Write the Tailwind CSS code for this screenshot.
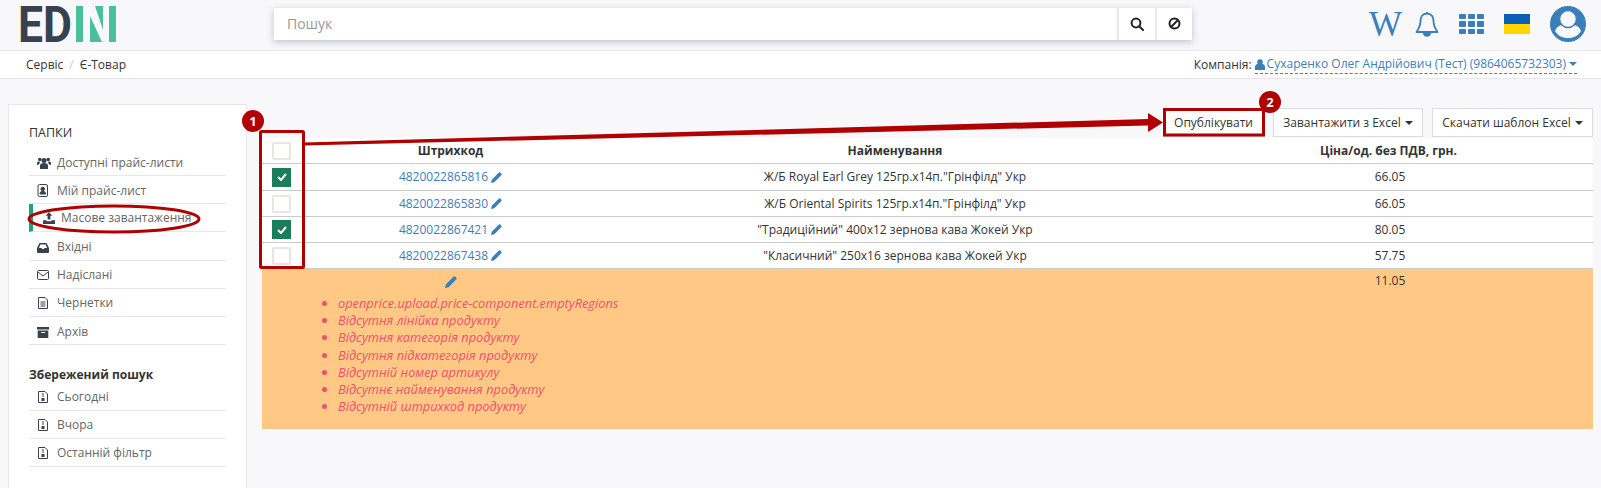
<!DOCTYPE html>
<html lang="uk">
<head>
  <meta charset="UTF-8">
  <title>Є-Товар - EDIN</title>
  <script src="https://cdn.jsdelivr.net/npm/@tailwindcss/browser@4"></script>
</head>
<body class="relative h-[488px] w-[1601px] overflow-hidden bg-[#f8f8fb] font-['Open_Sans',sans-serif] text-[12px] text-[#333]">
  <header class="flex h-[51px] items-center border-b border-[#e6e6ec] pl-[18px]">
    <svg width="58" height="50" viewBox="0 0 58 50">
      <text x="0" y="42" font-family="Roboto" font-weight="700" font-size="50" fill="#37424f" textLength="54" lengthAdjust="spacingAndGlyphs">ED</text>
    </svg>
    <svg class="mb-[2px]" width="40" height="36" viewBox="0 0 40 36">
      <path d="M0 0h7v36H0zM14 10v26h12zM19 0h8v24zM33 0h7v36h-7z" fill="#48c09b"/>
    </svg>
    <div class="mb-[3px] ml-[158px] flex h-[32px] w-[918px] bg-white shadow-[0_2px_7px_rgba(60,60,90,0.3)]">
      <div class="flex flex-1 items-center px-[13px] text-[14px] text-[#999]">Пошук</div>
      <div class="flex w-[38px] items-center justify-center border-l-2 border-[#e8e8e8]">
        <svg width="14" height="14" viewBox="0 0 14 14" fill="none" stroke="#222" stroke-width="2"><circle cx="6" cy="6" r="4.4"/><path d="M9.2 9.2 13 13" stroke-linecap="round"/></svg>
      </div>
      <div class="flex w-[37px] items-center justify-center border-l-2 border-[#e8e8e8]">
        <svg width="13" height="13" viewBox="0 0 13 13" fill="none" stroke="#222" stroke-width="2"><circle cx="6.5" cy="6.5" r="5"/><path d="M3 10 10 3"/></svg>
      </div>
    </div>
    <div class="mb-[2px] ml-[177px] flex items-center">
      <span class="w-[33px] font-['Liberation_Serif',serif] text-[35px] leading-none text-[#3a7fb8]">W</span>
      <svg class="ml-[13px]" width="24" height="26" viewBox="0 0 24 26" fill="none" stroke="#3a7fb8" stroke-width="1.8"><path d="M12 2.500c-4.500 0-6.500 3.500-6.500 7.500 0 5-2 8-4 11h21c-2-3-4-6-4-11 0-4-2-7.500-6.500-7.500z" stroke-linejoin="round"/><path d="M12 1v2"/><path d="M9 22.500c.5 3 5.500 3 6 0z" fill="#3a7fb8"/></svg>
      <div class="ml-[20px] grid grid-cols-3 gap-[2px]">
        <i class="h-[5.500px] w-[7px] rounded-[1px] bg-[#3a7fb8]"></i><i class="h-[5.500px] w-[7px] rounded-[1px] bg-[#3a7fb8]"></i><i class="h-[5.500px] w-[7px] rounded-[1px] bg-[#3a7fb8]"></i>
        <i class="h-[5.500px] w-[7px] rounded-[1px] bg-[#3a7fb8]"></i><i class="h-[5.500px] w-[7px] rounded-[1px] bg-[#3a7fb8]"></i><i class="h-[5.500px] w-[7px] rounded-[1px] bg-[#3a7fb8]"></i>
        <i class="h-[5.500px] w-[7px] rounded-[1px] bg-[#3a7fb8]"></i><i class="h-[5.500px] w-[7px] rounded-[1px] bg-[#3a7fb8]"></i><i class="h-[5.500px] w-[7px] rounded-[1px] bg-[#3a7fb8]"></i>
      </div>
      <div class="ml-[20px] h-[20px] w-[26px]">
        <div class="h-[10px] bg-[#0b5fb5]"></div>
        <div class="h-[10px] bg-[#ffd500]"></div>
      </div>
      <svg class="ml-[20px]" width="36" height="36" viewBox="0 0 36 36"><circle cx="18" cy="18" r="18" fill="#3a7fb8"/><path d="M5 25c1-3 4-6 8-6h10c4 0 7 3 8 6-2.500 4.500-7 7-13 7S7.500 29.500 5 25z" fill="#f8f8fb"/><circle cx="18" cy="13" r="8.500" fill="#f8f8fb" stroke="#3a7fb8" stroke-width="1.500"/></svg>
    </div>
  </header>

  <div class="flex h-[28px] items-center justify-between border-b border-[#e6e6ec] bg-white pr-[24px] pl-[26px]">
    <div class="flex items-center">
      <span>Сервіс</span><span class="ml-[6px] text-[#ccc]">/</span><span class="ml-[6px]">Є-Товар</span>
    </div>
    <div class="flex items-center">
      <span>Компанія:</span>
      <span class="ml-[3px] flex items-center border-b border-dashed border-[#3a7fb8] text-[#3a7fb8]">
        <svg width="10" height="11" viewBox="0 0 10 11" fill="#3a7fb8"><circle cx="5" cy="3" r="2.800"/><path d="M0 11V8c0-2 1.500-3 2.500-3h5C8.500 5 10 6 10 8v3z"/></svg>
        <span class="ml-[2px]">Сухаренко Олег Андрійович (Тест) (9864065732303)</span>
        <i class="ml-[3px] h-0 w-0 border-x-[4px] border-t-[4px] border-x-transparent border-t-[#3a7fb8]"></i>
      </span>
    </div>
  </div>

  <div class="flex pt-[25px] pl-[8px]">
    <aside class="h-[400px] w-[239px] border border-[#e6e6f0] bg-white pt-[19px] pr-[20px] pl-[20px]">
      <div class="mb-[6px] text-[12.500px] leading-[18px] font-medium">ПАПКИ</div>
      <ul class="text-[#666]">
        <li class="flex h-[28.170px] items-center border-b border-[#e8e8ec] pt-[2px] pl-[8px]">
          <svg width="14" height="12" viewBox="0 0 14 12" fill="#37424f"><circle cx="7" cy="3.500" r="2.500"/><circle cx="2.800" cy="2.500" r="1.800"/><circle cx="11.200" cy="2.500" r="1.800"/><path d="M3 12V8.500C3 7 4.500 6 7 6s4 1 4 2.500V12zM0 8V6c0-1 1-1.500 2-1.500l1 .5-1 2.500zM14 8V6c0-1-1-1.500-2-1.500l-1 .5 1 2.500z"/></svg>
          <span class="ml-[6px]">Доступні прайс-листи</span>
        </li>
        <li class="flex h-[28.170px] items-center border-b border-[#e8e8ec] pt-[2px] pl-[8px]">
          <svg width="12" height="13" viewBox="0 0 12 13" fill="none" stroke="#37424f"><rect x="1" y=".5" width="9.500" height="12" rx="1.500"/><circle cx="5.700" cy="5" r="1.800" fill="#37424f"/><path d="M3 10c0-4 5.500-4 5.500 0z" fill="#37424f"/></svg>
          <span class="ml-[8px]">Мій прайс-лист</span>
        </li>
        <li class="flex h-[28.170px] items-center border-b border-[#e8e8ec] border-l-[4px] border-l-[#19a67f] pl-[10px]">
          <svg width="12" height="12" viewBox="0 0 13 13" fill="#37424f"><path d="M6.500 0 10 4H8v4H5V4H3zM0 9h4v1h5V9h4v4H0z"/></svg>
          <span class="ml-[6px]">Масове завантаження</span>
        </li>
        <li class="flex h-[28.170px] items-center border-b border-[#e8e8ec] pt-[2px] pl-[8px]">
          <svg width="12" height="11" viewBox="0 0 12 11" fill="#37424f"><path d="M2.500 1h7L12 6v4a1 1 0 0 1-1 1H1a1 1 0 0 1-1-1V6zm.8 1.500L2 6h2.500l.7 1h1.600l.7-1H10L8.700 2.500z"/></svg>
          <span class="ml-[8px]">Вхідні</span>
        </li>
        <li class="flex h-[28.170px] items-center border-b border-[#e8e8ec] pt-[2px] pl-[8px]">
          <svg width="12" height="10" viewBox="0 0 12 10" fill="none" stroke="#37424f"><rect x=".5" y=".5" width="11" height="9" rx="1"/><path d="m1 2 5 4 5-4"/></svg>
          <span class="ml-[8px]">Надіслані</span>
        </li>
        <li class="flex h-[28.170px] items-center border-b border-[#e8e8ec] pt-[2px] pl-[8px]">
          <svg width="12" height="12" viewBox="0 0 12 12" fill="none" stroke="#37424f"><path d="M1.500.5H8L10.500 3v8.500h-9zM3.500 5h5M3.500 7h5M3.500 9h5"/></svg>
          <span class="ml-[8px]">Чернетки</span>
        </li>
        <li class="flex h-[28.170px] items-center border-b border-[#e8e8ec] pt-[2px] pl-[8px]">
          <svg width="12" height="12" viewBox="0 0 12 12" fill="#37424f"><path d="M0 1h12v2.500H0zM.7 4.500h10.600V12H.7z"/><path d="M4 6h4v1H4z" fill="#fff"/></svg>
          <span class="ml-[8px]">Архів</span>
        </li>
      </ul>
      <div class="mt-[21px] -mb-[1px] text-[12px] leading-[18px] font-bold text-[#333]">Збережений пошук</div>
      <ul class="text-[#666]">
        <li class="flex h-[28.170px] items-center border-b border-[#e8e8ec] pl-[8px]">
          <svg width="12" height="12" viewBox="0 0 12 12" fill="none" stroke="#37424f"><path d="M1.500.5H8L10.500 3v8.500h-9z"/><path d="M5.500 2h1v4h-1zM4.500 7h3v3h-3z" fill="#37424f" stroke="none"/></svg>
          <span class="ml-[8px]">Сьогодні</span>
        </li>
        <li class="flex h-[28.170px] items-center border-b border-[#e8e8ec] pl-[8px]">
          <svg width="12" height="12" viewBox="0 0 12 12" fill="none" stroke="#37424f"><path d="M1.500.5H8L10.500 3v8.500h-9z"/><path d="M5.500 2h1v4h-1zM4.500 7h3v3h-3z" fill="#37424f" stroke="none"/></svg>
          <span class="ml-[8px]">Вчора</span>
        </li>
        <li class="flex h-[28px] items-center border-b border-[#e8e8ec] pl-[8px]">
          <svg width="12" height="12" viewBox="0 0 12 12" fill="none" stroke="#37424f"><path d="M1.500.5H8L10.500 3v8.500h-9z"/><path d="M5.500 2h1v4h-1zM4.500 7h3v3h-3z" fill="#37424f" stroke="none"/></svg>
          <span class="ml-[8px]">Останній фільтр</span>
        </li>
      </ul>
    </aside>

    <main class="ml-[15px] w-[1331px]">
      <div class="flex h-[34px] justify-end gap-[9px] pt-[4px]">
        <button class="h-[29px] w-[101px] border border-[#ddd] bg-white">Опублікувати</button>
        <button class="flex h-[29px] w-[150px] items-center justify-center border border-[#ddd] bg-white">Завантажити з Excel<i class="ml-[4px] h-0 w-0 border-x-[4px] border-t-[4px] border-x-transparent border-t-[#333]"></i></button>
        <button class="flex h-[29px] w-[161px] items-center justify-center border border-[#ddd] bg-white">Скачати шаблон Excel<i class="ml-[4px] h-0 w-0 border-x-[4px] border-t-[4px] border-x-transparent border-t-[#333]"></i></button>
      </div>
      <div class="grid h-[26px] grid-cols-[39px_299px_590px_403px] items-center border-b border-[#ccc] bg-white text-center font-bold">
        <span class="mx-auto h-[18px] w-[19px] rounded-[2px] border-2 border-[#e9e6e2]"></span><span>Штрихкод</span><span>Найменування</span><span class="pr-[6px]">Ціна/од. без ПДВ, грн.</span>
      </div>
      <div class="grid h-[27px] grid-cols-[39px_299px_590px_403px] items-center border-b border-[#ccc] bg-white text-center">
        <span class="mx-auto flex h-[19px] w-[19px] items-center justify-center bg-[#1c7d5a]"><svg width="10" height="8" viewBox="0 0 10 8" fill="none" stroke="#fff" stroke-width="2"><path d="m1 4 3 3 5-6"/></svg></span>
        <span class="flex items-center justify-center text-[#3a7fb8]">4820022865816<svg class="ml-[3px]" width="11" height="11" viewBox="0 0 10 10" fill="#3a7fb8"><path d="M0 10 .7 7 7 .7a1.200 1.200 0 0 1 1.700 0l.6.6a1.200 1.200 0 0 1 0 1.700L3 9.300z"/></svg></span>
        <span>Ж/Б Royal Earl Grey 125гр.х14п."Грінфілд" Укр</span><span class="pr-[3px]">66.05</span>
      </div>
      <div class="grid h-[26px] grid-cols-[39px_299px_590px_403px] items-center border-b border-[#ccc] bg-white text-center">
        <span class="mx-auto h-[18px] w-[19px] rounded-[2px] border-2 border-[#e9e6e2]"></span>
        <span class="flex items-center justify-center text-[#3a7fb8]">4820022865830<svg class="ml-[3px]" width="11" height="11" viewBox="0 0 10 10" fill="#3a7fb8"><path d="M0 10 .7 7 7 .7a1.200 1.200 0 0 1 1.700 0l.6.6a1.200 1.200 0 0 1 0 1.700L3 9.300z"/></svg></span>
        <span>Ж/Б Oriental Spirits 125гр.х14п."Грінфілд" Укр</span><span class="pr-[3px]">66.05</span>
      </div>
      <div class="grid h-[26px] grid-cols-[39px_299px_590px_403px] items-center border-b border-[#ccc] bg-white text-center">
        <span class="mx-auto flex h-[19px] w-[19px] items-center justify-center bg-[#1c7d5a]"><svg width="10" height="8" viewBox="0 0 10 8" fill="none" stroke="#fff" stroke-width="2"><path d="m1 4 3 3 5-6"/></svg></span>
        <span class="flex items-center justify-center text-[#3a7fb8]">4820022867421<svg class="ml-[3px]" width="11" height="11" viewBox="0 0 10 10" fill="#3a7fb8"><path d="M0 10 .7 7 7 .7a1.200 1.200 0 0 1 1.700 0l.6.6a1.200 1.200 0 0 1 0 1.700L3 9.300z"/></svg></span>
        <span>"Традиційний" 400х12 зернова кава Жокей Укр</span><span class="pr-[3px]">80.05</span>
      </div>
      <div class="grid h-[26px] grid-cols-[39px_299px_590px_403px] items-center border-b border-[#ccc] bg-white text-center">
        <span class="mx-auto h-[18px] w-[19px] rounded-[2px] border-2 border-[#e9e6e2]"></span>
        <span class="flex items-center justify-center text-[#3a7fb8]">4820022867438<svg class="ml-[3px]" width="11" height="11" viewBox="0 0 10 10" fill="#3a7fb8"><path d="M0 10 .7 7 7 .7a1.200 1.200 0 0 1 1.700 0l.6.6a1.200 1.200 0 0 1 0 1.700L3 9.300z"/></svg></span>
        <span>"Класичний" 250х16 зернова кава Жокей Укр</span><span class="pr-[3px]">57.75</span>
      </div>
      <div class="grid h-[160px] grid-cols-[39px_299px_590px_403px] bg-[#ffc985] text-center">
        <span></span>
        <div class="col-span-2">
          <div class="flex h-[25px] w-[299px] items-center justify-center">
            <svg width="12" height="12" viewBox="0 0 10 10" fill="#3a7fb8"><path d="M0 10 .7 7 7 .7a1.200 1.200 0 0 1 1.700 0l.6.6a1.200 1.200 0 0 1 0 1.700L3 9.300z"/></svg>
          </div>
          <ul class="mt-[1px] list-outside list-disc pl-[37px] text-left text-[12.800px] leading-[17.200px] text-[#f0506e] italic">
            <li>openprice.upload.price-component.emptyRegions</li>
            <li>Відсутня лінійка продукту</li>
            <li>Відсутня категорія продукту</li>
            <li>Відсутня підкатегорія продукту</li>
            <li>Відсутній номер артикулу</li>
            <li>Відсутнє найменування продукту</li>
            <li>Відсутній штрихкод продукту</li>
          </ul>
        </div>
        <span class="pt-[3px] pr-[3px]">11.05</span>
      </div>
    </main>
  </div>

  <!-- annotations on top of the screenshot -->
  <svg class="pointer-events-none absolute top-0 left-0" width="1601" height="488" viewBox="0 0 1601 488" fill="none">
    <ellipse cx="114" cy="219" rx="85" ry="13" stroke="#b00000" stroke-width="3"/>
    <rect x="260.500" y="131.500" width="43" height="136" rx="1" stroke="#b00000" stroke-width="3"/>
    <path d="M304 142.500 1148 119v6.500L304 145.500z" fill="#b00000"/>
    <path d="M1148 113 1163 122.500 1148 132z" fill="#b00000"/>
    <rect x="1164.500" y="109.500" width="99" height="25.500" stroke="#b00000" stroke-width="3"/>
    <circle cx="253" cy="121" r="11" fill="#b00000"/>
    <circle cx="1270" cy="102" r="11" fill="#b00000"/>
  </svg>
  <span class="absolute top-[112px] left-[242px] w-[22px] text-center text-[13px] font-bold text-white">1</span>
  <span class="absolute top-[93px] left-[1259px] w-[22px] text-center text-[13px] font-bold text-white">2</span>
</body>
</html>
